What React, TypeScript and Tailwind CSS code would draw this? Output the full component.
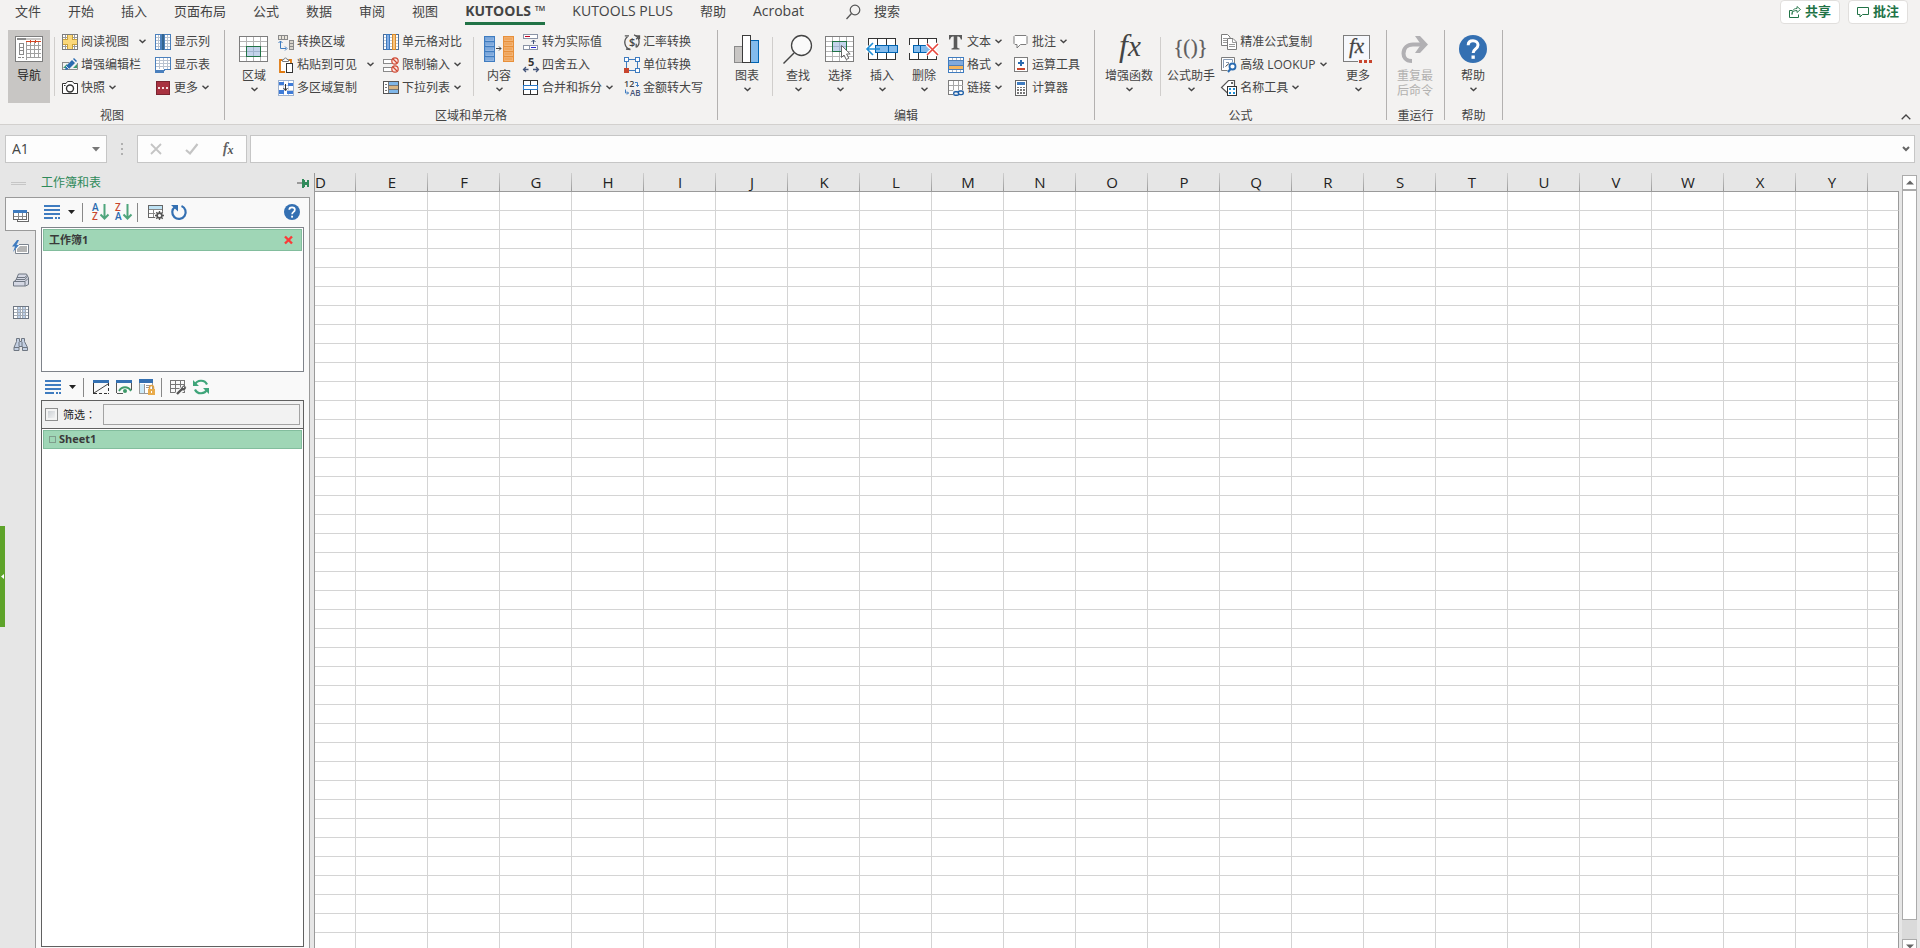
import React from "react";

type IconProps = { w?: number; h?: number; crisp?: boolean; children: React.ReactNode };

function Svg({ w = 16, h = 16, crisp = false, children }: IconProps) {
  return (
    <svg
      width={w}
      height={h}
      viewBox={`0 0 ${w} ${h}`}
      fill="none"
      className="block shrink-0 overflow-visible"
      shapeRendering={crisp ? "crispEdges" : "auto"}
      aria-hidden="true"
    >
      {children}
    </svg>
  );
}

const G = "#7d7d7d";
const SERIF = "'Liberation Serif', serif";
const SANS = "'Open Sans', sans-serif";

/* ---------- large ribbon icons ---------- */

const NavIcon = () => (
  <Svg w={28} h={28} crisp>
    <rect x="0.5" y="1.5" width="27" height="25" fill="#fff" stroke={G} />
    <rect x="2" y="3" width="24" height="2" fill="#c8c6c4" />
    <rect x="2" y="3" width="9" height="2" fill="#8a8a8a" />
    <path d="M11.5 6v19M15.5 6v17M19.5 6v17M23.5 6v17M11 10.5h15M11 14.5h15M11 18.5h15M11 22.5h15" stroke="#a0a0a0" />
    <path d="M11 6.5h15" stroke="#d24726" />
    <path d="M15.5 5v3M20.5 5v3" stroke="#d24726" />
    <rect x="4.5" y="8.5" width="4" height="11" stroke="#8a8a8a" />
    <path d="M4 12.5h5M4 15.5h5M3 22.5h3M7 22.5h2" stroke="#8a8a8a" />
  </Svg>
);

const RangeGrid = ({ cursor = false }: { cursor?: boolean }) => (
  <Svg w={30} h={28} crisp>
    <rect x="0.5" y="1.5" width="28" height="25" fill="#fff" stroke={G} />
    <path d="M7.5 2v24M14.5 2v24M21.5 2v24M1 6.5h27M1 11.5h27M1 16.5h27M1 21.5h27" stroke="#b4b4b4" />
    <rect x="7.5" y={cursor ? "6.5" : "11.5"} width="14" height="10" fill="#c3d3ea" stroke="#217346" />
    <path d={cursor ? "M14.5 7v9M8 11.5h13" : "M14.5 12v9M8 16.5h13"} stroke="#9fb3cc" />
    {cursor && (
      <path d="M16.5 10.5v12l2.500-2.500 2.200 4.500 2.600-1.200-2.200-4.300h3.600z" fill="#fff" stroke="#666" shapeRendering="auto" />
    )}
  </Svg>
);

const ContentIcon = () => (
  <Svg w={30} h={28} crisp>
    <rect x="0" y="1" width="11" height="26" fill="#3f7cc0" />
    <rect x="19" y="1" width="11" height="26" fill="#e8903a" />
    {[3, 8, 13, 18, 23].map((y) => (
      <g key={y}>
        <rect x="1.5" y={y - 0.5} width="8" height="3" fill="#7fa9dc" stroke="#9dbfe8" strokeWidth="0.6" />
        <rect x="20.5" y={y - 0.5} width="8" height="3" fill="#f0a55a" stroke="#f5c08a" strokeWidth="0.6" />
      </g>
    ))}
    <path d="M12 13.5h5M15 11.5l2 2-2 2" stroke="#444" shapeRendering="auto" />
  </Svg>
);

const ChartIcon = () => (
  <Svg w={26} h={28} crisp>
    <rect x="0.5" y="11.5" width="8" height="16" fill="#c8c6c4" stroke="#8a8a8a" />
    <rect x="16.5" y="5.5" width="8" height="22" fill="#83bbec" stroke="#0063b1" />
    <rect x="8.5" y="0.5" width="8" height="27" fill="#fff" stroke="#3b3b3b" />
  </Svg>
);

const FindIcon = () => (
  <Svg w={30} h={30}>
    <circle cx="18.5" cy="10.5" r="10" fill="#fafafa" stroke="#444" strokeWidth="1.3" />
    <path d="M11 18L0.5 28.5" stroke="#444" strokeWidth="1.5" />
  </Svg>
);

const InsertIcon = () => (
  <Svg w={32} h={28} crisp>
    <rect x="2.5" y="3.5" width="27" height="21" fill="#fff" stroke="#333" />
    <path d="M11.5 4v20M20.5 4v20" stroke="#333" />
    <rect x="9.5" y="10.5" width="22" height="7" fill="#83bbec" stroke="#0063b1" />
    <path d="M22.5 11v6" stroke="#0063b1" />
    <g shapeRendering="auto">
      <path d="M0 14h9" stroke="#fff" strokeWidth="7" />
      <path d="M14 14H1M7 8l-6 6 6 6" stroke="#1e8fd8" strokeWidth="1.6" />
    </g>
  </Svg>
);

const DeleteIcon = () => (
  <Svg w={32} h={28} crisp>
    <path d="M1.5 10V3.500h27V10M1.5 18v6.500h27V18" fill="#fff" stroke="#333" />
    <path d="M10.500 4v20M19.500 4v20" stroke="#333" />
    <path d="M2 10h26v8H2z" fill="#fff" />
    <rect x="5.5" y="10.5" width="16" height="7" fill="#83bbec" stroke="#0063b1" />
    <path d="M12.5 11v6" stroke="#0063b1" />
    <g shapeRendering="auto">
      <path d="M19 9l11 11M30 9L19 20" stroke="#fff" strokeWidth="4" />
      <path d="M19 9l11 11M30 9L19 20" stroke="#e8463c" strokeWidth="1.6" />
    </g>
  </Svg>
);

const FxIcon = () => (
  <Svg w={32} h={28}>
    <text x="6" y="21" fontFamily={SERIF} fontStyle="italic" fontSize="32" fill="#444">
      f
    </text>
    <text x="15" y="21" fontFamily={SERIF} fontStyle="italic" fontSize="29" fill="#444">
      x
    </text>
  </Svg>
);

const BraceIcon = () => (
  <Svg w={32} h={28}>
    <text x="15" y="19" textAnchor="end" fontFamily={SERIF} fontSize="20" fill="#5c5c5c" stroke="#5c5c5c" strokeWidth="0.3">
      {"{("}
    </text>
    <text x="16" y="19" fontFamily={SERIF} fontSize="20" fill="#5c5c5c" stroke="#5c5c5c" strokeWidth="0.3">
      {")}"}
    </text>
  </Svg>
);

const MoreFxIcon = () => (
  <Svg w={30} h={28}>
    <rect x="0.5" y="0.5" width="26" height="26" fill="#f6f8fc" stroke={G} />
    <text x="6" y="18" fontFamily={SERIF} fontStyle="italic" fontSize="21" fill="#444" stroke="#444" strokeWidth="0.3">
      fx
    </text>
    <rect x="15" y="24" width="15" height="4" fill="#f3f2f1" />
    <path d="M16 25h3v3h-3zM21 25h3v3h-3zM26 25h3v3h-3z" fill="#c8452e" />
  </Svg>
);

const RedoIcon = () => (
  <Svg w={28} h={28}>
    <path d="M11 26C4 26 2.5 21 2.5 18.5C2.5 13 6.5 9.5 12 9.5H23" stroke="#b1b0b3" strokeWidth="4" />
    <path d="M14 1h5l8 8.5-8 8.5h-5l6-8.5z" fill="#b1b0b3" />
  </Svg>
);

const HelpIcon = ({ size }: { size: number }) => (
  <svg width={size} height={size} viewBox="0 0 28 28" fill="none" className="block shrink-0" aria-hidden="true">
    <circle cx="14" cy="14" r="14" fill="#3470b2" />
    <path d="M9.2 10.2C9.2 7.2 11.2 5.8 14 5.8s5 1.7 5 4.300c0 2.200-1.300 3.200-2.700 4.200-1.400 1-2.100 1.700-2.100 3.700" stroke="#fff" strokeWidth="3" />
    <rect x="12.5" y="20.5" width="3.3" height="3.3" fill="#fff" />
  </svg>
);

/* ---------- small ribbon icons ---------- */

const ReadViewIcon = () => (
  <Svg crisp>
    <rect x="0.5" y="0.5" width="15" height="15" fill="#fff" stroke={G} />
    <path d="M3.5 1v14M12.5 1v14M1 3.5h14M1 12.5h14" stroke="#9a9a9a" />
    <path d="M6 1h4v5h5v4h-5v5H6v-5H1V6h5z" fill="#fbd87a" />
    <path d="M5.5 1v4.5H1M10.5 1v4.5H15M1 10.5h4.500V15M15 10.5h-4.500V15" stroke="#c9a13c" />
  </Svg>
);
const EditBarIcon = () => (
  <Svg>
    <path d="M1 5.5h6M0.5 5v8M1 12.5h14.500V6" stroke="#8a8a8a" />
    <path d="M1 11l4-4v4zM15 11V7l-4 4z" fill="#3a9a6e" />
    <path d="M3 13l1-4 6-6 3 3-6 6z" fill="#2a6bb0" />
    <path d="M11 2l1-1 3 3-1 1z" fill="#2a6bb0" />
    <path d="M4 9l3 3" stroke="#fff" strokeWidth="0.8" />
  </Svg>
);
const CameraIcon = () => (
  <Svg>
    <path d="M0.5 3.5H4l1.500-2h5l1.500 2h3.500v10H0.5z" fill="#fff" stroke="#333" />
    <circle cx="8" cy="8.5" r="3.5" stroke="#333" strokeWidth="1.4" />
    <path d="M2 5.5h1.5" stroke="#333" />
  </Svg>
);
const ShowColIcon = () => (
  <Svg crisp>
    <rect x="0.5" y="0.5" width="15" height="15" fill="#fff" stroke="#4a80bd" />
    <path d="M1 3.5h14M1 6.5h14M1 9.5h14M1 12.5h14M3.5 1v14M12.5 1v14" stroke="#b9c3d0" />
    <rect x="5" y="0" width="5" height="16" fill="#4a80bd" />
    <rect x="7" y="0" width="2" height="16" fill="#34658f" />
  </Svg>
);
const ShowTableIcon = () => (
  <Svg crisp>
    <path d="M0.5 0.5h15v12H10l-1.500 2.500H0.5z" fill="#fff" stroke="#4a80bd" />
    <path d="M1 3.5h14M1 6.5h14M1 9.5h14M4.5 1v11M8.5 1v11M12.5 1v11" stroke="#b9c3d0" />
    <path d="M1 13h8v2H1z" fill="#4a80bd" />
  </Svg>
);
const MoreRedIcon = () => (
  <Svg crisp>
    <rect x="1.5" y="1.5" width="13" height="13" fill="#a83240" stroke="#7a2430" />
    <path d="M3 7h2v2H3zM7 7h2v2H7zM11 7h2v2h-2z" fill="#f3dfe0" />
  </Svg>
);
const TransformIcon = () => (
  <Svg crisp>
    <path d="M0.5 1.5h9v4h-9zM3.5 2v3M6.5 2v3" fill="#e8e4da" stroke="#8a8a8a" />
    <path d="M11.5 6.5h4v9h-4zM12 9.5h3M12 12.5h3" fill="#d8d4ca" stroke="#8a8a8a" />
    <path d="M2.5 7v7.500H8M0.500 9l2-2 2 2M7 12.500l2 2-2 2" stroke="#3f7cc0" shapeRendering="auto" />
  </Svg>
);
const PasteIcon = () => (
  <Svg>
    <path d="M4 3H2v12h5M11 3h2v3" stroke="#e07a10" strokeWidth="1.800" />
    <rect x="3" y="4" width="9" height="10" fill="#fff" />
    <path d="M4.5 2.5H6a1.500 1.500 0 013 0h1.500v2h-6z" fill="#fff" stroke="#7d7d7d" />
    <rect x="8.5" y="6.5" width="6" height="9" fill="#fff" stroke="#333" />
  </Svg>
);
const MultiCopyIcon = () => (
  <Svg crisp>
    <rect x="0.5" y="0.5" width="15" height="15" fill="#fff" stroke="#9db2d0" />
    <path d="M5.5 1v14M10.5 1v14M1 5.5h14M1 10.5h14" stroke="#c5d0e0" />
    <path d="M1 2h5v3H1zM10 3h5v3h-5zM1 10h5v4H1zM9 11h6v3H9z" fill="#3f7cd8" />
    <path d="M7.5 4v6M5.5 8l2 2.500 2-2.500" stroke="#333" shapeRendering="auto" />
  </Svg>
);
const CompareIcon = () => (
  <Svg crisp>
    <rect x="0.5" y="0.5" width="15" height="15" fill="#fff" stroke="#4a6f9d" />
    <path d="M1 3.5h14M1 6.5h14M1 9.5h14M1 12.5h14" stroke="#c5ccd5" />
    <path d="M3.5 0.5h3v15h-3z" fill="#83aee6" stroke="#3f7cc0" />
    <path d="M9.5 0.5h3v15h-3z" fill="#f7c583" stroke="#d98b2b" />
  </Svg>
);
const RestrictIcon = () => (
  <Svg>
    <rect x="0.5" y="2.5" width="9" height="4" fill="#fff" stroke="#8a8a8a" />
    <rect x="0.5" y="10.5" width="9" height="4" fill="#fff" stroke="#8a8a8a" />
    <g stroke="#cf4a35" strokeWidth="1.2">
      <circle cx="12" cy="4" r="3.200" fill="#fbe4e0" />
      <path d="M10 2l4 4" />
      <circle cx="12" cy="12" r="3.200" fill="#fbe4e0" />
      <path d="M10 10l4 4" />
    </g>
  </Svg>
);
const DropListIcon = () => (
  <Svg crisp>
    <rect x="0.5" y="1.5" width="15" height="12" fill="#fff" stroke="#555" />
    <rect x="5" y="2" width="10" height="4" fill="#7fb6e8" />
    <rect x="5" y="6" width="10" height="3" fill="#d9b583" />
    <rect x="5" y="9" width="10" height="4" fill="#7fb6e8" />
    <path d="M5.5 2v11M6 5.5h9M6 9.5h9" stroke="#777" />
    <path d="M2 4.500h2M2 7.500h2M2 10.500h2" stroke="#777" />
  </Svg>
);
const ActualIcon = () => (
  <Svg crisp>
    <rect x="0.5" y="0.5" width="14" height="4" fill="#fff" stroke="#8a93a5" />
    <path d="M2 2.500h5" stroke="#c00020" />
    <path d="M10.5 10V6M8.500 8l2-2 2 2" stroke="#44557a" shapeRendering="auto" />
    <rect x="0.5" y="11.5" width="14" height="4" fill="#fff" stroke="#8a93a5" />
    <path d="M6.5 12v3" stroke="#8a93a5" />
    <path d="M8 13.500h5" stroke="#2424d0" />
  </Svg>
);
const RoundIcon = () => (
  <Svg>
    <text x="5" y="9" fontFamily={SANS} fontWeight="700" fontSize="11" fill="#333">
      5
    </text>
    <path d="M0.5 12.500h5M3 10l-2.500 2.500L3 15M10 12.500h5.500M13 10l2.500 2.500L13 15" stroke="#44557a" strokeWidth="1.3" />
  </Svg>
);
const MergeIcon = () => (
  <Svg crisp>
    <rect x="0.5" y="0.5" width="14" height="14" fill="#fff" stroke="#333" />
    <path d="M7.5 1v4M7.5 10v4" stroke="#333" />
    <rect x="0.5" y="5.5" width="14" height="4" fill="#fff" stroke="#2a78c8" />
  </Svg>
);
const CurrencyIcon = () => (
  <Svg>
    <path d="M6 15.300A7.200 7.200 0 013.500 2.800M10 0.800A7.200 7.200 0 0112.500 13.200" stroke="#555" strokeWidth="1.300" />
    <path d="M6.500 15.500L2 15M5 1.800H0.800M12.200 13.500V9.800M11.500 1.800h4v3.500M15.200 2l-3 3.200" stroke="#555" strokeWidth="1.300" />
    <text x="5" y="12" fontFamily={SANS} fontWeight="600" fontSize="11" fill="#444">
      $
    </text>
  </Svg>
);
const UnitIcon = () => (
  <Svg crisp>
    <path d="M2.5 2.5h11v11h-11z" stroke="#3f7cc0" />
    <path d="M0.5 0.5h4v4h-4zM11.5 0.5h4v4h-4zM11.5 11.5h4v4h-4z" fill="#fff" stroke="#3f7cc0" />
    <rect x="0" y="11" width="5" height="5" fill="#c8452e" />
  </Svg>
);
const AmountIcon = () => (
  <Svg>
    <text x="0" y="7" fontFamily={SANS} fontWeight="600" fontSize="9" fill="#444">
      12
    </text>
    <text x="6" y="16" fontFamily={SANS} fontWeight="600" fontSize="8" fill="#44557a">
      AB
    </text>
    <path d="M11 2.500h2.500v4M12 5l1.500 1.500L15 5M1.500 9.500v3.500h3M3 11.500L4.500 13 3 14.500" stroke="#3f7cc0" />
  </Svg>
);
const TextIcon = () => (
  <Svg>
    <path d="M1 1h13v4.500h-1.200C12.500 3.500 11.500 2.500 10 2.500H9.300V13c0 1 .7 1.300 2.200 1.400V15.500h-8v-1.100C5 14.300 5.700 14 5.700 13V2.500H5C3.500 2.500 2.500 3.500 2.200 5.500H1z" fill="#5a5a5a" />
  </Svg>
);
const FormatIcon = () => (
  <Svg crisp>
    <rect x="0.5" y="0.5" width="15" height="15" fill="#fff" stroke="#3f7cc0" />
    <path d="M4.5 1v14M8.5 1v14M12.5 1v14" stroke="#b0b8c4" />
    <rect x="1" y="4" width="14" height="4" fill="#7fa9dc" />
    <rect x="1" y="8" width="14" height="4" fill="#f3b45c" />
    <path d="M1 3.5h14M1 8.5h14M1 12.5h14" stroke="#4f7fb7" />
  </Svg>
);
const LinkIcon = () => (
  <Svg>
    <g shapeRendering="crispEdges">
      <rect x="0.5" y="0.5" width="14" height="14" fill="#fff" stroke={G} />
      <path d="M5.5 1v14M10.5 1v14M1 5.5h14M1 10.5h14" stroke="#a8a8a8" />
      <rect x="5" y="10" width="11" height="6" fill="#f3f2f1" />
    </g>
    <rect x="5.7" y="11.7" width="5" height="3.6" rx="1.6" stroke="#1e5fa8" strokeWidth="1.4" />
    <rect x="10.3" y="11" width="5" height="3.6" rx="1.6" stroke="#1e5fa8" strokeWidth="1.4" />
  </Svg>
);
const CommentIcon = () => (
  <Svg>
    <path d="M2 1.500h11l1 1v7l-1 1H7.500L4 14V10.500H2l-1-1v-7z" fill="#fff" stroke="#7d7d7d" />
  </Svg>
);
const CalcToolIcon = () => (
  <Svg crisp>
    <rect x="1.5" y="0.5" width="13" height="14" fill="#fff" stroke={G} />
    <path d="M5 5h6v2H5zM7 3h2v6H7z" fill="#2a6bb0" />
    <rect x="4" y="11" width="8" height="2" fill="#c8452e" />
  </Svg>
);
const CalculatorIcon = () => (
  <Svg crisp>
    <rect x="2.5" y="0.5" width="11" height="15" fill="#fff" stroke="#666" />
    <rect x="4" y="2" width="8" height="3" fill="#3f7cc0" />
    <path d="M4 7h2v1H4zM7 7h2v1H7zM10 7h2v1h-2zM4 9h2v2H4zM7 9h2v2H7zM10 9h2v2h-2zM4 12h2v2H4zM7 12h2v2H7zM10 12h2v2h-2z" fill="#777" />
  </Svg>
);
const ExactCopyIcon = () => (
  <Svg>
    <path d="M0.5 0.5h6l2.500 2.500v8.500H0.5z" fill="#fff" stroke={G} />
    <path d="M2 4.500h4M2 6.500h5M2 8.500h5" stroke="#999" />
    <path d="M6.5 4.500h5.500l3.500 3.500v7.500h-9z" fill="#fff" stroke={G} />
    <path d="M11.5 5v3.500h4M8 10.500h6M8 12.500h6" stroke="#999" />
  </Svg>
);
const LookupIcon = () => (
  <Svg>
    <path d="M13.5 6V0.500h-13v13h6" fill="#fff" stroke={G} />
    <path d="M2.500 11V2.500h9V5M5 5.500h3" stroke="#8a9db5" />
    <path d="M4.500 9.500l3.500-3" stroke="#444" />
    <circle cx="11.5" cy="9.500" r="3" fill="#fff" stroke="#2a6bb0" strokeWidth="1.8" />
    <path d="M9.5 12L7 15" stroke="#2a6bb0" strokeWidth="2" />
  </Svg>
);
const NameToolIcon = () => (
  <Svg>
    <path d="M7 13.500L0.500 7.500 7.500 0.500h6V6" fill="#fff" stroke="#555" strokeWidth="1.2" />
    <path d="M10 3h2" stroke="#333" strokeWidth="1.5" />
    <rect x="6.5" y="6.5" width="9" height="9" fill="#fff" stroke="#333" />
    <path d="M8 8h2v2H8zM12 8h2v2h-2zM8 12h2v2H8zM12 12h2v2h-2z" fill="#1e8fd8" />
  </Svg>
);

/* ---------- shared small parts ---------- */

const Chevron = () => (
  <svg width="7" height="5" viewBox="0 0 7 5" fill="none" className="block shrink-0" aria-hidden="true">
    <path d="M0.500 0.700l3 2.800 3-2.800" stroke="#444" strokeWidth="1.400" />
  </svg>
);

function Big({ icon, label, width, menu = true, active, disabled }: {
  icon: React.ReactNode;
  label: React.ReactNode;
  width: string;
  menu?: boolean;
  active?: boolean;
  disabled?: boolean;
}) {
  return (
    <button
      type="button"
      disabled={disabled}
      className={`flex h-[73px] shrink-0 flex-col items-center pt-[5px] text-xs leading-[15px] ${width} ${active ? "bg-[#c8c6c4] text-[#222]" : ""} ${disabled ? "text-[#b1b0af]" : ""}`}
    >
      <span className="flex h-[33px] items-start">{icon}</span>
      <span>{label}</span>
      {menu && (
        <span className="mt-1">
          <Chevron />
        </span>
      )}
    </button>
  );
}

type SmallItem = { icon: React.ReactNode; label: string; menu?: boolean; split?: boolean };

function Stack({ items, className = "" }: { items: SmallItem[]; className?: string }) {
  return (
    <div className={`flex shrink-0 flex-col items-start ${className}`}>
      {items.map((it) => (
        <button key={it.label} type="button" className="flex h-[23px] items-center whitespace-nowrap text-xs leading-4">
          {it.icon}
          <span className="ml-[3px]">{it.label}</span>
          {(it.menu || it.split) && (
            <span className={it.split ? "ml-[10px]" : "ml-1"}>
              <Chevron />
            </span>
          )}
        </button>
      ))}
    </div>
  );
}

const Rule = ({ className }: { className: string }) => (
  <span className={`mt-[7px] h-[59px] w-px shrink-0 bg-[#d0cecc] ${className}`} />
);

function Group({ title, className = "", children }: { title: string; className?: string; children: React.ReactNode }) {
  return (
    <section className="flex h-[90px] shrink-0 flex-col border-r border-[#b3b1b0]">
      <div className={`flex h-[80px] shrink-0 items-start ${className}`}>{children}</div>
      <h2 className="text-center text-xs leading-3">{title}</h2>
    </section>
  );
}

/* ---------- ribbon ---------- */

const tabs: { label: string; latin?: boolean }[] = [
  { label: "文件" },
  { label: "开始" },
  { label: "插入" },
  { label: "页面布局" },
  { label: "公式" },
  { label: "数据" },
  { label: "审阅" },
  { label: "视图" },
  { label: "KUTOOLS ™", latin: true },
  { label: "KUTOOLS PLUS", latin: true },
  { label: "帮助" },
  { label: "Acrobat", latin: true },
];

function TabBar() {
  return (
    <nav className="flex h-[30px] items-start pl-[15px] pr-3">
      <div className="flex gap-[27px]">
        {tabs.map((t) => {
          const active = t.label === "KUTOOLS ™";
          return (
            <button
              key={t.label}
              type="button"
              className={`h-[25px] whitespace-nowrap border-b-3 pb-px leading-5 ${t.latin ? "text-sm" : "text-[13px]"} ${active ? "border-[#217346] font-bold" : "border-transparent"}`}
            >
              {active ? (
                <>
                  KUTOOLS <span className="font-normal">™</span>
                </>
              ) : (
                t.label
              )}
            </button>
          );
        })}
      </div>
      <button type="button" className="ml-[42px] flex h-6 items-center gap-[13px] text-[13px]">
        <Svg w={15} h={16}>
          <circle cx="9" cy="6" r="4.8" stroke="#555" strokeWidth="1.2" />
          <path d="M5.500 9.500L0.500 15" stroke="#555" strokeWidth="1.3" />
        </Svg>
        搜索
      </button>
      <div className="ml-auto flex gap-2">
        <button type="button" className="flex h-6 w-[60px] items-center justify-center gap-1 rounded-sm border border-[#e1dfdd] bg-white text-[13px] font-bold text-[#217346]">
          <Svg w={12} h={12}>
            <path d="M3 4.500H0.500v7h9V8.500" stroke="#217346" />
            <path d="M3 8.500C3 5.500 5 4.500 8 4.500V6.500L11.500 3.500 8 0.500v2C4 2.500 3 5 3 8.500z" stroke="#217346" strokeWidth="0.9" />
          </Svg>
          共享
        </button>
        <button type="button" className="flex h-6 w-[60px] items-center justify-center gap-1 rounded-sm border border-[#e1dfdd] bg-white text-[13px] font-bold text-[#217346]">
          <Svg w={12} h={12}>
            <path d="M0.500 1.500h11v7h-6l-2.500 2.500v-2.500h-2.500z" stroke="#217346" />
          </Svg>
          批注
        </button>
      </div>
    </nav>
  );
}

function Ribbon() {
  return (
    <div className="flex h-[95px] items-start border-b border-[#d2d0ce]">
      <Group title="视图" className="pl-2 pr-[14px]">
        <Big icon={<NavIcon />} label="导航" width="w-[42px]" menu={false} active />
        <Rule className="ml-1" />
        <Stack
          className="ml-[7px]"
          items={[
            { icon: <ReadViewIcon />, label: "阅读视图", split: true },
            { icon: <EditBarIcon />, label: "增强编辑栏" },
            { icon: <CameraIcon />, label: "快照", menu: true },
          ]}
        />
        <Stack
          className="ml-[9px]"
          items={[
            { icon: <ShowColIcon />, label: "显示列" },
            { icon: <ShowTableIcon />, label: "显示表" },
            { icon: <MoreRedIcon />, label: "更多", menu: true },
          ]}
        />
      </Group>

      <Group title="区域和单元格" className="pl-[7px] pr-[14px]">
        <Big icon={<RangeGrid />} label="区域" width="w-[44px]" />
        <Stack
          className="ml-[2px]"
          items={[
            { icon: <TransformIcon />, label: "转换区域" },
            { icon: <PasteIcon />, label: "粘贴到可见", split: true },
            { icon: <MultiCopyIcon />, label: "多区域复制" },
          ]}
        />
        <Stack
          className="ml-[9px]"
          items={[
            { icon: <CompareIcon />, label: "单元格对比" },
            { icon: <RestrictIcon />, label: "限制输入", menu: true },
            { icon: <DropListIcon />, label: "下拉列表", menu: true },
          ]}
        />
        <Rule className="ml-[11px]" />
        <Big icon={<ContentIcon />} label="内容" width="ml-[3px] w-[44px]" />
        <Stack
          className="ml-[2px]"
          items={[
            { icon: <ActualIcon />, label: "转为实际值" },
            { icon: <RoundIcon />, label: "四舍五入" },
            { icon: <MergeIcon />, label: "合并和拆分", menu: true },
          ]}
        />
        <Stack
          className="ml-[11px]"
          items={[
            { icon: <CurrencyIcon />, label: "汇率转换" },
            { icon: <UnitIcon />, label: "单位转换" },
            { icon: <AmountIcon />, label: "金额转大写" },
          ]}
        />
      </Group>

      <Group title="编辑" className="pl-[7px] pr-[14px]">
        <Big icon={<ChartIcon />} label="图表" width="w-[44px]" />
        <Rule className="ml-[3px] mr-1" />
        <Big icon={<FindIcon />} label="查找" width="w-[42px]" />
        <Big icon={<RangeGrid cursor />} label="选择" width="w-[42px]" />
        <Big icon={<InsertIcon />} label="插入" width="w-[42px]" />
        <Big icon={<DeleteIcon />} label="删除" width="w-[42px]" />
        <Stack
          className="ml-[3px]"
          items={[
            { icon: <TextIcon />, label: "文本", menu: true },
            { icon: <FormatIcon />, label: "格式", menu: true },
            { icon: <LinkIcon />, label: "链接", menu: true },
          ]}
        />
        <Stack
          className="ml-[11px]"
          items={[
            { icon: <CommentIcon />, label: "批注", menu: true },
            { icon: <CalcToolIcon />, label: "运算工具" },
            { icon: <CalculatorIcon />, label: "计算器" },
          ]}
        />
      </Group>

      <Group title="公式" className="pl-[6px] pr-[6px]">
        <Big icon={<FxIcon />} label="增强函数" width="w-[56px]" />
        <Rule className="mx-[3px]" />
        <Big icon={<BraceIcon />} label="公式助手" width="w-[54px]" />
        <Stack
          className="ml-[3px] w-[110px]"
          items={[
            { icon: <ExactCopyIcon />, label: "精准公式复制" },
            { icon: <LookupIcon />, label: "高级 LOOKUP", menu: true },
            { icon: <NameToolIcon />, label: "名称工具", menu: true },
          ]}
        />
        <Big icon={<MoreFxIcon />} label="更多" width="ml-[5px] w-[44px]" />
      </Group>

      <Group title="重运行" className="pl-[6px] pr-[7px]">
        <Big
          icon={<RedoIcon />}
          label={
            <>
              重复最
              <br />
              后命令
            </>
          }
          width="w-[44px]"
          menu={false}
          disabled
        />
      </Group>

      <Group title="帮助" className="pl-[6px] pr-[7px]">
        <Big icon={<HelpIcon size={28} />} label="帮助" width="w-[44px]" />
      </Group>

      <button type="button" aria-label="折叠功能区" className="mb-[3px] ml-auto mr-2 self-end p-px">
        <Svg w={10} h={6}>
          <path d="M0.700 5.300L5 1l4.300 4.300" stroke="#444" strokeWidth="1.3" />
        </Svg>
      </button>
    </div>
  );
}

/* ---------- formula bar ---------- */

function FormulaBar() {
  return (
    <div className="flex h-[48px] shrink-0 items-center px-[5px]">
      <div className="flex h-7 w-[102px] items-center border border-[#c6c6c6] bg-[#fdfdfd] pr-[6px]">
        <input aria-label="名称框" defaultValue="A1" className="w-full min-w-0 bg-transparent pl-[6px] text-sm text-[#444] outline-none" />
        <Svg w={8} h={5}>
          <path d="M0 0h8L4 4.500z" fill="#777" />
        </Svg>
      </div>
      <span className="ml-[14px] flex w-[2px] flex-col gap-[3px]">
        <i className="h-[2px] bg-[#b0b0b0]" />
        <i className="h-[2px] bg-[#b0b0b0]" />
        <i className="h-[2px] bg-[#b0b0b0]" />
      </span>
      <div className="ml-[14px] flex h-7 w-[110px] items-center justify-between border border-[#c6c6c6] bg-[#fdfdfd] pl-3 pr-[11px]">
        <button type="button" aria-label="取消">
          <Svg w={12} h={12}>
            <path d="M1 1l10 10M11 1L1 11" stroke="#c4c4c4" strokeWidth="1.8" />
          </Svg>
        </button>
        <button type="button" aria-label="输入">
          <Svg w={14} h={12}>
            <path d="M1 7l4 3.500L12.500 1" stroke="#c4c4c4" strokeWidth="2.2" />
          </Svg>
        </button>
        <button type="button" aria-label="插入函数">
          <Svg w={14} h={16}>
            <text x="2" y="12" fontFamily={SERIF} fontStyle="italic" fontSize="15" fill="#555" stroke="#555" strokeWidth="0.4">
              f
            </text>
            <text x="6.500" y="13" fontFamily={SERIF} fontStyle="italic" fontWeight="700" fontSize="12" fill="#555">
              x
            </text>
          </Svg>
        </button>
      </div>
      <div className="ml-[3px] flex h-7 flex-1 items-center border border-[#c6c6c6] bg-[#fdfdfd] pr-1">
        <input aria-label="编辑栏" className="h-full w-full min-w-0 bg-transparent px-2 text-sm outline-none" />
        <Svg w={8} h={6}>
          <path d="M1 1l3 3 3-3" stroke="#666" strokeWidth="2" />
        </Svg>
      </div>
    </div>
  );
}

/* ---------- navigation pane ---------- */

const PaneTabs = [
  {
    name: "工作簿和表",
    icon: (
      <Svg crisp>
        <path d="M4.5 4.5h11v9h-11z" fill="#fff" stroke="#6a6a6a" />
        <path d="M0.5 2.5h13v9h-13z" fill="#fff" stroke="#6a6a6a" />
        <path d="M0 2h14v3H0z" fill="#3f7cc0" />
        <path d="M1 8.500h12M5.500 5v6M9.500 5v6" stroke="#8a8a8a" />
      </Svg>
    ),
  },
  {
    name: "自动图文集",
    icon: (
      <Svg>
        <path d="M6 4.500h9.500v9H2.500V9" fill="#fff" stroke="#7d8590" />
        <path d="M7 6h7v6H4V9z" fill="#b4b4b4" />
        <path d="M4 0L-1 6.500h3L0 12l6-7H3.500L6 0z" fill="#3f7cc0" />
      </Svg>
    ),
  },
  {
    name: "资源库",
    icon: (
      <Svg>
        <path d="M3 8L5.500 2h8l2 4v6.500l-3 1.500H0.500v-4z" fill="#d5d8e4" stroke="#6f7782" />
        <path d="M3 7.500h9l2-3M4 5.500h8l1.500-2M0.500 9.500h11.500l3-3M12 9.500V14" stroke="#6f7782" />
      </Svg>
    ),
  },
  {
    name: "列列表",
    icon: (
      <Svg crisp>
        <rect x="0.5" y="2.5" width="15" height="12" fill="#fff" stroke="#6f7782" />
        <rect x="5" y="3" width="2" height="11" fill="#bcd0ea" />
        <rect x="10" y="3" width="2" height="11" fill="#bcd0ea" />
        <path d="M4.500 3v11M7.500 3v11M9.500 3v11M12.500 3v11M1 5.500h14M1 8.500h14M1 11.500h14" stroke="#a4acb6" />
      </Svg>
    ),
  },
  {
    name: "高级查找和替换",
    icon: (
      <Svg>
        <path d="M3.500 2.500h3v3h2v-3h3v3l3 6v3h-5v-4h-3.500v4h-5v-3l2.500-6z" fill="#c3cfe2" stroke="#6f7782" />
        <path d="M1 11.500h5M9.500 11.500h5M6 6v4M9 6v4" stroke="#6f7782" />
      </Svg>
    ),
  },
];

const ListMenuIcon = () => (
  <Svg crisp>
    <path d="M0 1h16v2H0zM0 5h16v2H0zM0 9h16v2H0zM0 13h9v2H0zM11 13h2v2h-2zM14 13h2v2h-2z" fill="#3f7cc0" />
  </Svg>
);
const Caret = () => (
  <Svg w={7} h={4}>
    <path d="M0 0h7L3.500 4z" fill="#222" />
  </Svg>
);
const SortIcon = ({ first, second }: { first: string; second: string }) => (
  <Svg w={17} h={18}>
    <text x="0" y="7.500" fontFamily={SANS} fontWeight="600" fontSize="10" fill={first === "A" ? "#2a6bb0" : "#c8452e"}>
      {first}
    </text>
    <text x="0" y="17" fontFamily={SANS} fontWeight="600" fontSize="10" fill={second === "A" ? "#2a6bb0" : "#c8452e"}>
      {second}
    </text>
    <path d="M12.500 1v14M8.500 11.500l4 4 4-4" stroke="#4fa57c" strokeWidth="2" />
  </Svg>
);
const GearTableIcon = () => (
  <Svg>
    <g shapeRendering="crispEdges">
      <rect x="0.5" y="1.5" width="14" height="12" fill="#fff" stroke="#666" />
      <rect x="1" y="2" width="13" height="3" fill="#bfe3f5" />
      <path d="M1 5.500h13M1 9.500h8M5.500 6v7" stroke="#888" />
    </g>
    <circle cx="11.5" cy="11.5" r="4.8" fill="#f9f9f9" />
    <circle cx="11.5" cy="11.5" r="2.4" stroke="#555" strokeWidth="1.6" />
    <path d="M11.500 7v2M11.500 14v2M7 11.500h2M14 11.500h2M8.300 8.300l1.400 1.400M13.300 13.300l1.400 1.400M8.300 14.700l1.400-1.400M13.300 9.700l1.400-1.400" stroke="#555" strokeWidth="1.3" />
  </Svg>
);
const RefreshBlueIcon = () => (
  <Svg>
    <path d="M10.500 2a6.700 6.700 0 11-6.500.8" stroke="#3470b2" strokeWidth="2.2" />
    <path d="M0 1h7v6.500z" fill="#3470b2" />
  </Svg>
);
const HideWindowIcon = () => (
  <Svg crisp>
    <rect x="0" y="1" width="16" height="3" fill="#3470b2" />
    <path d="M0.500 4v11" stroke="#333" />
    <path d="M15.500 4v11M1 14.500h15" stroke="#333" strokeDasharray="3 2" />
    <path d="M1 14L15 5" stroke="#444" shapeRendering="auto" />
  </Svg>
);
const ShowWindowIcon = () => (
  <Svg crisp>
    <rect x="0" y="1" width="16" height="3" fill="#3470b2" />
    <path d="M0.500 4v10M15.500 4v7M1 14.500h6" stroke="#555" />
    <g shapeRendering="auto">
      <path d="M3 12c3-5 9-5 12 0" stroke="#3f9a6a" strokeWidth="1.8" />
      <circle cx="9" cy="12" r="2" fill="#3f9a6a" />
    </g>
  </Svg>
);
const LockWindowIcon = () => (
  <Svg>
    <g shapeRendering="crispEdges">
      <rect x="0.5" y="1.5" width="13" height="13" fill="#fff" stroke="#999" />
      <rect x="0" y="0" width="14" height="4" fill="#3470b2" />
      <rect x="1" y="5" width="4" height="9" fill="#cdeaf8" />
      <path d="M5.500 5v9M7 6.500h5M7 8.500h3" stroke="#999" />
    </g>
    <path d="M10.500 10V8.500a2 2 0 014 0V10" stroke="#e0a040" strokeWidth="1.5" />
    <rect x="9" y="10" width="7" height="6" fill="#e8ab4c" />
    <rect x="12" y="12" width="1" height="2" fill="#fff" />
  </Svg>
);
const ToolTableIcon = () => (
  <Svg>
    <path d="M0.500 1.500h14v12h-14zM5.500 2v11M10.500 2v11M1 5.500h13M1 9.500h13" stroke="#777" shapeRendering="crispEdges" />
    <path d="M7 15.500l6-6" stroke="#f9f9f9" strokeWidth="5" />
    <path d="M7 15l5.500-5.500" stroke="#555" strokeWidth="2.4" />
    <path d="M14.500 6.500l-2 2 1 1 2.200-1.800c.4 2-1 3.600-2.700 3.500-1.700-.2-2.200-3.700 1.500-4.700z" fill="#555" stroke="#555" strokeWidth="0.6" />
  </Svg>
);
const SyncIcon = () => (
  <Svg>
    <path d="M2 5.500C4 1 11.500 0 14 5.500M14 10.500C12 15 4.500 16 2 10.500" stroke="#3fa57a" strokeWidth="2.2" />
    <path d="M0 1v6h6zM16 15V9h-6z" fill="#3fa57a" />
  </Svg>
);

const ToolBtn = ({ label, className = "", children }: { label: string; className?: string; children: React.ReactNode }) => (
  <button type="button" aria-label={label} className={className}>
    {children}
  </button>
);

function NavigationPane() {
  return (
    <aside className="relative flex h-full w-[310px] shrink-0 flex-col">
      <header className="flex h-6 shrink-0 items-start pl-[11px] pr-px">
        <span className="mt-[9px] h-[3px] w-[15px] border-y border-[#c6c6c6]" />
        <h2 className="ml-[15px] text-xs leading-5 text-[#2f8a5a]">工作簿和表</h2>
        <button type="button" aria-label="固定窗格" className="ml-auto mt-[6px]">
          <Svg w={12} h={9} crisp>
            <rect x="0" y="3" width="5" height="2" fill="#999" />
            <path d="M5 0h2v1h1v2h2V1h2v7h-2V6H8v2H7v1H5z" fill="#2f8a5a" />
          </Svg>
        </button>
      </header>

      <div className="flex min-h-0 flex-1">
        <div className="flex w-[35px] shrink-0 flex-col pl-[5px]">
          {PaneTabs.map((t, i) => (
            <button
              key={t.name}
              type="button"
              aria-label={t.name}
              className={
                i === 0
                  ? "relative z-10 -mr-px mb-px flex h-[34px] items-center border-y border-l border-[#9a9a9a] bg-[#f9f9f9] pl-[7px] pt-1"
                  : "flex h-8 items-center pl-2"
              }
            >
              {t.icon}
            </button>
          ))}
        </div>

        <div className="flex min-w-0 flex-1 flex-col border-x border-t border-[#9a9a9a] bg-[#f9f9f9] px-[5px]">
          <div className="flex h-[29px] shrink-0 items-center pb-px pl-[3px] pr-1">
            <ToolBtn label="工作簿菜单" className="flex items-center gap-2">
              <ListMenuIcon />
              <Caret />
            </ToolBtn>
            <span className="ml-[7px] h-[19px] w-px bg-[#888]" />
            <ToolBtn label="升序" className="ml-[9px]"><SortIcon first="A" second="Z" /></ToolBtn>
            <ToolBtn label="降序" className="ml-[6px]"><SortIcon first="Z" second="A" /></ToolBtn>
            <span className="ml-[5px] h-[19px] w-px bg-[#888]" />
            <ToolBtn label="设置" className="ml-[10px]"><GearTableIcon /></ToolBtn>
            <ToolBtn label="刷新" className="ml-[7px]"><RefreshBlueIcon /></ToolBtn>
            <ToolBtn label="帮助" className="ml-auto"><HelpIcon size={16} /></ToolBtn>
          </div>

          <div className="h-[145px] shrink-0 border border-[#7f838a] bg-white p-px">
            <div className="flex h-[22px] items-center justify-between border border-[#82bd9d] bg-[#9fd6b6] pl-[5px] pr-2 text-[11px] font-bold text-[#3a3a3a]">
              工作簿1
              <button type="button" aria-label="关闭工作簿">
                <Svg w={9} h={8}>
                  <path d="M1 0.500l7 7M8 0.500l-7 7" stroke="#fb3a38" strokeWidth="2.4" />
                </Svg>
              </button>
            </div>
          </div>

          <div className="flex h-[28px] shrink-0 items-center pl-1 pt-[2px]">
            <ToolBtn label="工作表菜单" className="flex items-center gap-2">
              <ListMenuIcon />
              <Caret />
            </ToolBtn>
            <span className="ml-[7px] h-[19px] w-px bg-[#888]" />
            <ToolBtn label="隐藏工作表" className="ml-[9px]"><HideWindowIcon /></ToolBtn>
            <ToolBtn label="显示工作表" className="ml-[7px]"><ShowWindowIcon /></ToolBtn>
            <ToolBtn label="保护工作表" className="ml-[7px]"><LockWindowIcon /></ToolBtn>
            <span className="ml-[6px] h-[19px] w-px bg-[#888]" />
            <ToolBtn label="工作表工具" className="ml-2"><ToolTableIcon /></ToolBtn>
            <ToolBtn label="同步" className="ml-[7px]"><SyncIcon /></ToolBtn>
          </div>

          <div className="mb-px flex min-h-0 flex-1 flex-col border border-[#606060] bg-white">
            <div className="flex h-7 shrink-0 items-center border-b border-[#606060] bg-[#f1f1f1] px-[3px]">
              <input
                id="filter-toggle"
                type="checkbox"
                className="size-[13px] appearance-none border border-[#8e8f8f] bg-[linear-gradient(135deg,#c3c8cd,#fafafa)] shadow-[inset_0_0_0_2px_#f4f4f4]"
              />
              <label htmlFor="filter-toggle" className="ml-[5px] w-[40px] whitespace-nowrap pt-px text-[11px] text-[#222]">
                筛选<span className="font-['Noto_Sans_CJK_TC',sans-serif]">：</span>
              </label>
              <input aria-label="筛选" className="h-[21px] min-w-0 flex-1 border border-[#a3a3a3] bg-[#f2f2f2] px-1 text-[11px] outline-none" />
            </div>
            <div className="m-px flex h-[19px] shrink-0 items-center gap-[3px] border border-[#82bd9d] bg-[#9fd6b6] pl-[5px] text-[11px] font-bold text-[#3a3a3a]">
              <span className="size-[7px] border border-[#7f9d8c]" />
              Sheet1
            </div>
          </div>
        </div>
      </div>

      <button type="button" aria-label="展开侧栏" className="absolute left-0 top-[353px] flex h-[101px] w-[5px] items-center justify-center bg-[#5ea32a]">
        <Svg w={3} h={5}>
          <path d="M3 0v5L0 2.500z" fill="#fff" />
        </Svg>
      </button>
    </aside>
  );
}

/* ---------- worksheet ---------- */

const columns = "DEFGHIJKLMNOPQRSTUVWXY".split("");
const rows = Array.from({ length: 60 }, (_, i) => i);

function Sheet() {
  return (
    <div className="h-full min-w-0 flex-1 overflow-hidden border-l border-[#9a9a9a]">
      <table className="w-full table-fixed border-separate border-spacing-0">
        <colgroup>
          {columns.map((c) => (
            <col key={c} className={c === "D" ? "w-[41px]" : "w-[72px]"} />
          ))}
          <col />
        </colgroup>
        <thead>
          <tr>
            {columns.map((c) => (
              <th
                key={c}
                scope="col"
                className={`h-[19px] border-b border-[#9a9a9a] bg-[linear-gradient(#cfcfcf,#9a9a9a)] bg-[length:1px_100%] bg-right bg-no-repeat px-0 pb-0 pt-px text-[15px] leading-[17px] font-normal text-[#222] ${c === "D" ? "text-left" : "text-center"}`}
              >
                {c}
              </th>
            ))}
            <th className="h-[19px] border-b border-[#9a9a9a] p-0" />
          </tr>
        </thead>
        <tbody>
          {rows.map((r) => (
            <tr key={r}>
              {columns.map((c) => (
                <td key={c} className="h-[19px] border-b border-r border-[#d4d4d4] bg-white p-0" />
              ))}
              <td className="h-[19px] border-b border-r border-b-[#d4d4d4] border-r-[#9a9a9a] bg-white p-0" />
            </tr>
          ))}
        </tbody>
      </table>
    </div>
  );
}

function ScrollBar() {
  return (
    <div className="-mb-[6px] mx-[3px] mt-[2px] flex w-[15px] shrink-0 flex-col bg-[#dadada]">
      <button type="button" aria-label="向上滚动" className="flex h-[15px] items-center justify-center border border-[#ababab] bg-white">
        <Svg w={8} h={5}>
          <path d="M0 4.500h8L4 0.500z" fill="#666" />
        </Svg>
      </button>
      <div className="flex-1 border border-[#ababab] bg-white" />
      <button type="button" aria-label="向下滚动" className="mt-[19px] flex h-[15px] items-center justify-center border border-[#ababab] bg-white">
        <Svg w={8} h={5}>
          <path d="M0 0.500h8L4 4.500z" fill="#666" />
        </Svg>
      </button>
    </div>
  );
}

export default function App() {
  return (
    <div className="flex h-screen flex-col overflow-hidden bg-[#e6e6e6] font-['Open_Sans','Noto_Sans_CJK_SC',sans-serif] text-[#444]">
      <div className="shrink-0 bg-[#f3f2f1]">
        <TabBar />
        <Ribbon />
      </div>
      <FormulaBar />
      <main className="flex min-h-0 flex-1 overflow-hidden">
        <NavigationPane />
        <span className="w-1 shrink-0" />
        <Sheet />
        <ScrollBar />
      </main>
    </div>
  );
}
